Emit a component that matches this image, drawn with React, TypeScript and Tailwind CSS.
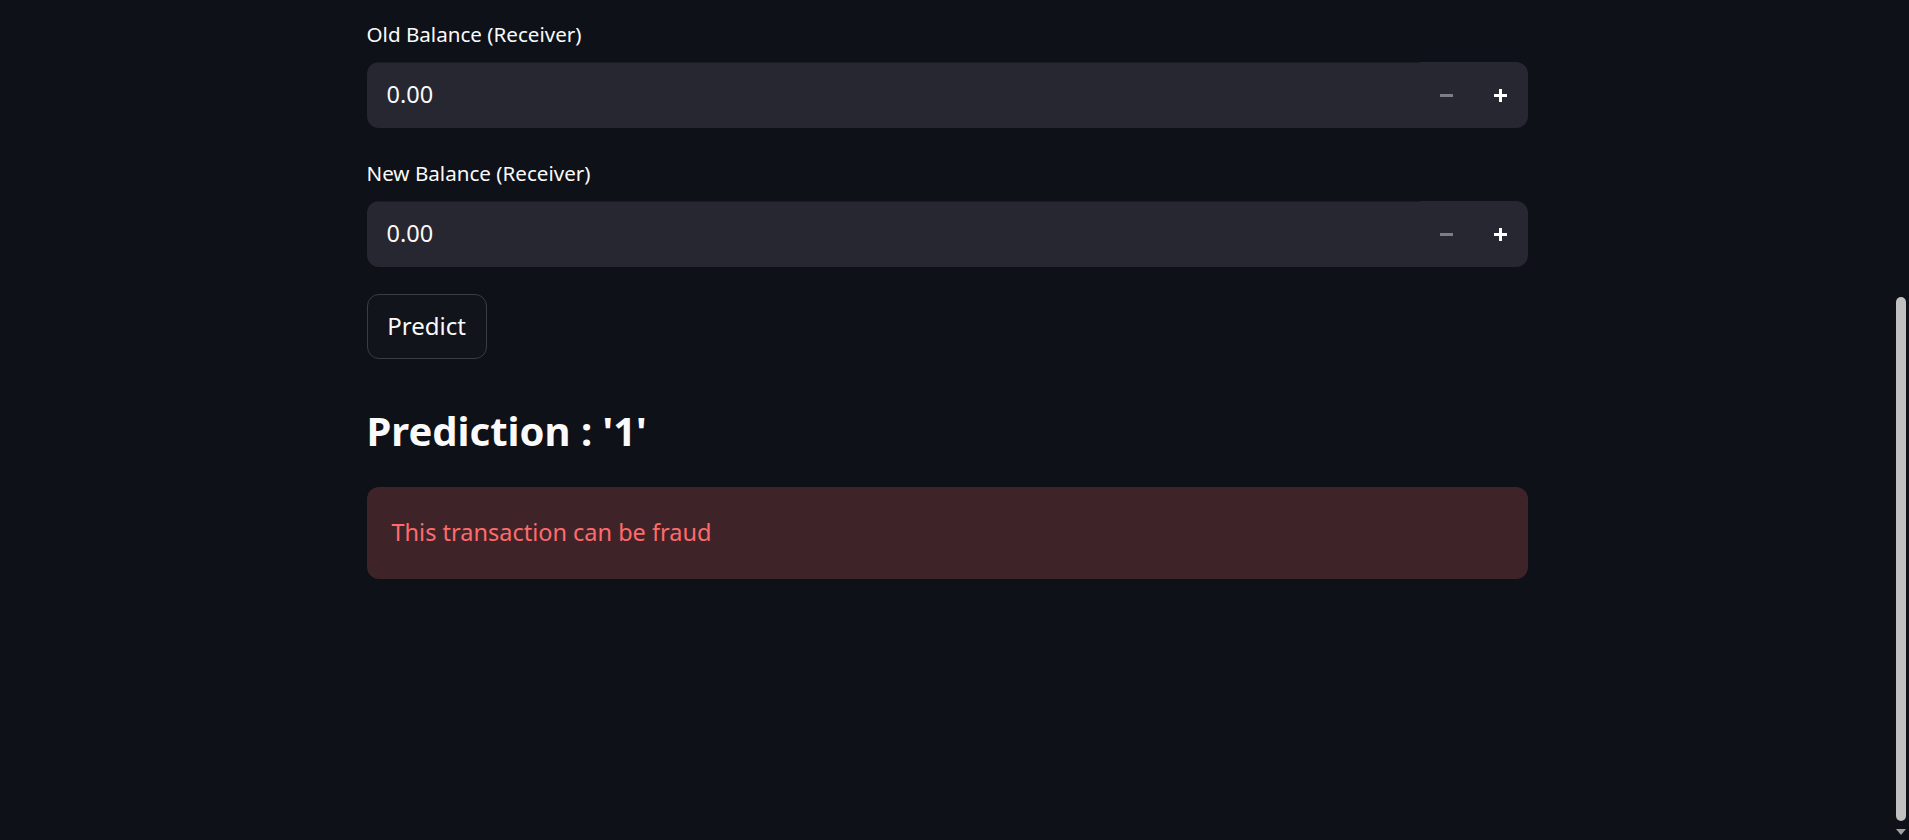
import React from "react";

const font = { fontFamily: '"Noto Sans", "Open Sans", sans-serif' };

function NumberField({ label, top }: { label: string; top: string }) {
  return (
    <div className={`flex flex-col ${top}`}>
      <div className="h-[24px] text-[20.6px] leading-[24px] text-[#fafafa]">{label}</div>
      <div className="mt-[16px] flex h-[66px] w-full overflow-hidden rounded-[12px] bg-[#262730]">
        <div className="flex flex-1 items-center border-t border-[#1b1c23] pb-[2px] pl-[20px] text-[23.5px] text-[#fafafa]">
          0.00
        </div>
        <div className="flex w-[54px] items-center justify-center">
          <div className="h-[3px] w-[13px] bg-[#7d7e85]" />
        </div>
        <div className="flex w-[54px] items-center justify-center">
          <div className="relative h-[13px] w-[13px]">
            <div className="absolute left-0 top-[5px] h-[3px] w-[13px] bg-white" />
            <div className="absolute left-[5px] top-0 h-[13px] w-[3px] bg-white" />
          </div>
        </div>
      </div>
    </div>
  );
}

export default function App() {
  return (
    <div className="flex h-[840px] w-full overflow-hidden bg-[#0e1117]" style={font}>
      <div className="flex flex-1 justify-center">
        <div className="flex w-[1161px] flex-col pt-[22px]">
          <NumberField label="Old Balance (Receiver)" top="" />
          <NumberField label="New Balance (Receiver)" top="mt-[33px]" />
          <div className="mt-[27px]">
            <button className="flex h-[65px] w-[120px] items-center justify-center rounded-[12px] border border-[#3b3d45] bg-[#11141b] pb-[2px] text-[24px] text-[#fafafa]">
              Predict
            </button>
          </div>
          <h2 className="mt-[48px] text-[40px] font-bold leading-[47px] text-[#fafafa]">
            Prediction : '1'
          </h2>
          <div className="mt-[33px] flex h-[92px] items-center rounded-[12px] bg-[#3e2428] pb-[2px] pl-[25px] text-[23.5px] leading-[32px] text-[#ff6b6b]">
            This transaction can be fraud
          </div>
        </div>
      </div>
      <div className="relative w-[15px]">
        <div className="absolute left-[2px] top-[297px] h-[524px] w-[10px] rounded-full bg-[#c1c1c1]" />
        <div className="absolute left-[2px] top-[829px] h-0 w-0 border-l-[5px] border-r-[5px] border-t-[6px] border-l-transparent border-r-transparent border-t-[#a0a0a0]" />
      </div>
    </div>
  );
}
